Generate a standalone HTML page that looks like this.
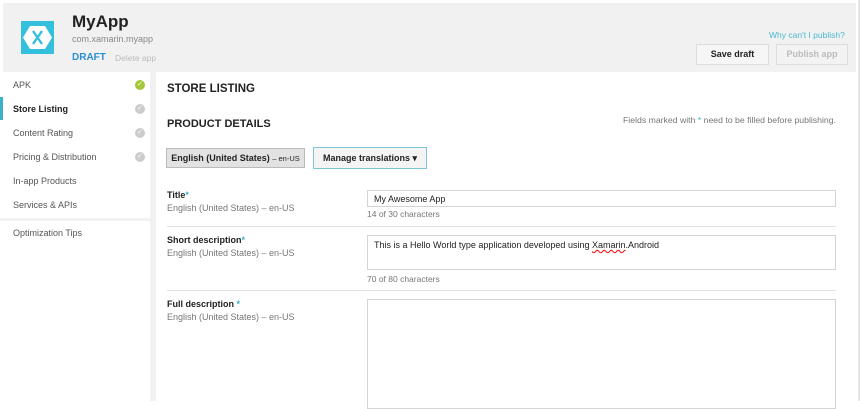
<!DOCTYPE html>
<html><head><style>
*{margin:0;padding:0;box-sizing:border-box}
body{width:860px;height:401px;overflow:hidden;background:#fff;font-family:"Liberation Sans",Arial,sans-serif;position:relative}
.a{position:absolute}
.hdr{left:3px;top:3px;width:853px;height:69px;background:#f1f1f1}
.side{left:0;top:72px;width:150px;height:329px;background:#fff}
.gap{left:150px;top:72px;width:6px;height:329px;background:#f1f1f1}
.nav{left:13px;font-size:9px;color:#555}
.chk{left:135px;width:10px;height:10px;border-radius:50%;background:#ccc;color:#fff;font-size:7px;line-height:10px;text-align:center}
.lbl{left:167px;font-size:9px;color:#222;font-weight:bold}
.sub{left:167px;font-size:9px;color:#777}
.st{color:#3bb0c9}
.inp{border:1px solid #d4d4d4;background:#fff;left:367px;width:469px;font-size:9px;color:#222;padding:4px 6px}
.cnt{left:367px;font-size:8.5px;color:#777}
.hr{left:167px;width:669px;height:1px;background:#e2e2e2}
.btn{font-size:9px;font-weight:bold;text-align:center;border:1px solid #ddd}
</style></head><body>
<div class="a hdr"></div>
<div class="a" style="left:21px;top:21px;width:33px;height:33px;background:#34bfdc"></div>
<svg class="a" style="left:21px;top:21px" width="33" height="33"><polygon points="9,5 24,5 31,16.5 24,28 9,28 2,16.5" fill="#fff"/><path d="M12 10 L21 23 M21 10 L12 23" stroke="#34bfdc" stroke-width="2.4"/></svg>
<div class="a" style="left:72px;top:12px;font-size:17px;font-weight:bold;color:#222">MyApp</div>
<div class="a" style="left:72px;top:34px;font-size:9px;color:#888">com.xamarin.myapp</div>
<div class="a" style="left:72px;top:52px;font-size:10px;font-weight:bold;color:#2b8fd6">DRAFT</div>
<div class="a" style="left:115px;top:53px;font-size:8.5px;color:#bbb">Delete app</div>
<div class="a" style="left:769px;top:30px;font-size:8.5px;color:#4bb8d0">Why can't I publish?</div>
<div class="a btn" style="left:696px;top:44px;width:73px;height:21px;line-height:19px;background:#f6f6f6;color:#222">Save draft</div>
<div class="a btn" style="left:776px;top:44px;width:72px;height:21px;line-height:19px;background:#f3f3f3;color:#bbb">Publish app</div>
<div class="a side"></div>
<div class="a gap"></div>
<div class="a" style="left:0;top:218px;width:150px;height:3px;background:#f1f1f1"></div>
<div class="a" style="left:0;top:97px;width:3px;height:23px;background:#3bb0c9"></div>
<div class="a nav" style="top:80px">APK</div>
<div class="a chk" style="top:80px;background:#a4c639">✓</div>
<div class="a nav" style="top:104px;color:#222;font-weight:bold">Store Listing</div>
<div class="a chk" style="top:104px">✓</div>
<div class="a nav" style="top:128px">Content Rating</div>
<div class="a chk" style="top:128px">✓</div>
<div class="a nav" style="top:152px">Pricing &amp; Distribution</div>
<div class="a chk" style="top:152px">✓</div>
<div class="a nav" style="top:176px">In-app Products</div>
<div class="a nav" style="top:200px">Services &amp; APIs</div>
<div class="a nav" style="top:228px">Optimization Tips</div>
<div class="a" style="left:167px;top:83px;font-size:11.5px;font-weight:bold;color:#222">STORE LISTING</div>
<div class="a" style="left:167px;top:118px;font-size:11px;font-weight:bold;color:#222">PRODUCT DETAILS</div>
<div class="a" style="left:623px;top:115px;font-size:8.7px;color:#777">Fields marked with <span class="st">*</span> need to be filled before publishing.</div>
<div class="a btn" style="left:166px;top:148px;width:139px;height:20px;line-height:18px;background:#e2e2e2;border-color:#bbb;color:#222">English (United States) <span style="font-weight:normal;font-size:7.5px">– en-US</span></div>
<div class="a btn" style="left:313px;top:147px;width:114px;height:22px;line-height:20px;background:#f4f4f4;border-color:#7cc6d8;color:#222">Manage translations ▾</div>
<div class="a lbl" style="top:190px">Title<span class="st">*</span></div>
<div class="a sub" style="top:203px">English (United States) – en-US</div>
<div class="a inp" style="top:190px;height:17px;padding-top:3px">My Awesome App</div>
<div class="a cnt" style="top:209px">14 of 30 characters</div>
<div class="a hr" style="top:226px"></div>
<div class="a lbl" style="top:235px">Short description<span class="st">*</span></div>
<div class="a sub" style="top:248px">English (United States) – en-US</div>
<div class="a inp" style="top:235px;height:35px">This is a Hello World type application developed using <span style="text-decoration:underline wavy red">Xamarin</span>.Android</div>
<div class="a cnt" style="top:274px">70 of 80 characters</div>
<div class="a hr" style="top:290px"></div>
<div class="a lbl" style="top:299px">Full description <span class="st">*</span></div>
<div class="a sub" style="top:312px">English (United States) – en-US</div>
<div class="a inp" style="top:299px;height:110px"></div>
<div class="a" style="left:858px;top:0;width:2px;height:401px;background:#e6e6e6"></div>
</body></html>
